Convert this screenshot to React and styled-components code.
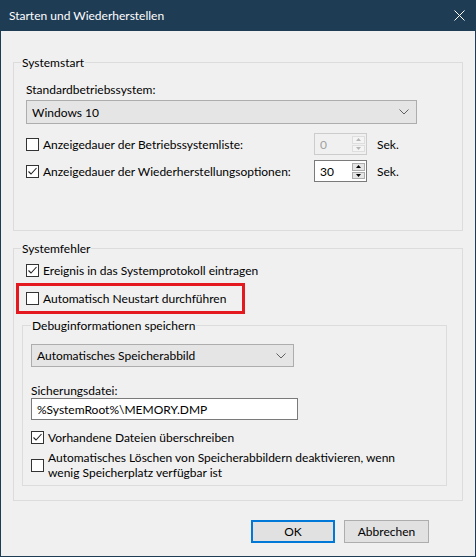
import React from "react";
import styled, { createGlobalStyle } from "styled-components";

const GlobalStyle = createGlobalStyle`
    html, body {
        margin: 0;
        padding: 0;
        background: #f0f0f0;
    }
    * {
        box-sizing: border-box;
    }
`;

const Window = styled.div`
    width: 476px;
    height: 557px;
    display: flex;
    flex-direction: column;
    background: #f0f0f0;
    border: 1px solid #1f3c55;
    border-top: none;
    font-family: "Lato", "Liberation Sans", sans-serif;
    font-size: 12px;
    line-height: 15px;
    color: #000;
`;

const TitleBar = styled.div`
    height: 31px;
    flex-shrink: 0;
    display: flex;
    align-items: center;
    justify-content: space-between;
    padding: 0 10px 0 8px;
    background: #1f3c55;
    color: #fff;
    font-size: 12px;
`;

const Body = styled.div`
    display: flex;
    flex-direction: column;
    padding: 24px 12px 0 12px;
`;

const Group = styled.fieldset`
    margin: ${(p) => p.$margin || "0"};
    padding: ${(p) => p.$padding || "0 12px"};
    border: 1px solid #dcdcdc;
    min-width: 0;
    display: flex;
    flex-direction: column;
`;

const Legend = styled.legend`
    padding: 0 1px;
    margin-left: ${(p) => p.$offset || 0}px;
`;

const Label = styled.div`
    margin-top: ${(p) => p.$top || 0}px;
`;

const Combo = styled.div`
    width: ${(p) => p.$width}px;
    height: ${(p) => p.$height || 24}px;
    margin-top: ${(p) => p.$top || 0}px;
    display: flex;
    align-items: center;
    justify-content: space-between;
    padding: 0 7px 0 5px;
    background: #e5e5e5;
    border: 1px solid #adadad;
`;

const TextBox = styled.div`
    width: ${(p) => p.$width}px;
    height: 22px;
    display: flex;
    align-items: center;
    padding: 0 5px;
    background: #fff;
    border: 1px solid #7a7a7a;
`;

const SpinRow = styled.div`
    display: grid;
    grid-template-columns: 278px 53px auto;
    column-gap: 10px;
    align-items: center;
    margin-top: ${(p) => p.$top || 0}px;
`;

const Spinner = styled.div`
    height: 22px;
    display: flex;
    align-items: stretch;
    border: 1px solid ${(p) => (p.$disabled ? "#cccccc" : "#7a7a7a")};
    color: ${(p) => (p.$disabled ? "#a0a0a0" : "#000")};
    background: ${(p) => (p.$disabled ? "#f0f0f0" : "#fff")};
`;

const SpinValue = styled.div`
    flex: 1;
    display: flex;
    align-items: center;
    padding-left: 5px;
`;

const SpinButtons = styled.div`
    width: 16px;
    display: flex;
    flex-direction: column;
    gap: 1px;
    padding: 2px 1px 2px 2px;
`;

const SpinButton = styled.div`
    flex: 1;
    display: flex;
    align-items: center;
    justify-content: center;
    background: ${(p) => (p.$disabled ? "#f4f4f4" : "#e5e5e5")};
    border: 1px solid ${(p) => (p.$disabled ? "#dedede" : "#acacac")};
`;

const CheckRow = styled.label`
    display: flex;
    align-items: center;
    gap: 4px;
    margin-top: ${(p) => p.$top || 0}px;
`;

const Box = styled.span`
    width: 13px;
    height: 13px;
    flex-shrink: 0;
    display: flex;
    align-items: center;
    justify-content: center;
    background: #fff;
    border: 1px solid #333;
`;

const Highlight = styled.div`
    width: 229px;
    margin: 5px 0 0 -10px;
    padding: 5px 7px;
    border: 3px solid #e3191f;
`;

const Footer = styled.div`
    display: flex;
    justify-content: flex-end;
    gap: 9px;
    padding: 19px 46px 0 0;
`;

const Button = styled.button`
    width: ${(p) => p.$width}px;
    height: 23px;
    padding: 0;
    font: inherit;
    color: #000;
    background: #e1e1e1;
    border: ${(p) => (p.$default ? "2px solid #0078d7" : "1px solid #adadad")};
`;

const Check = ({ checked }) => (
    <Box>
        {checked && (
            <svg width="11" height="11" viewBox="0 0 11 11">
                <path d="M1.5 5.5 L4 8 L9.5 2" fill="none" stroke="#222" strokeWidth="1.1" />
            </svg>
        )}
    </Box>
);

const Chevron = () => (
    <svg width="10" height="6" viewBox="0 0 10 6">
        <path d="M0.5 0.5 L5 5 L9.5 0.5" fill="none" stroke="#606060" strokeWidth="1" />
    </svg>
);

const Arrow = ({ up, disabled }) => (
    <svg width="5" height="3" viewBox="0 0 5 3">
        <path d={up ? "M0 3 L2.5 0 L5 3 Z" : "M0 0 L5 0 L2.5 3 Z"} fill={disabled ? "#b5b5b5" : "#000"} />
    </svg>
);

const NumberBox = ({ value, disabled }) => (
    <Spinner $disabled={disabled}>
        <SpinValue>{value}</SpinValue>
        <SpinButtons>
            <SpinButton $disabled={disabled}><Arrow up disabled={disabled} /></SpinButton>
            <SpinButton $disabled={disabled}><Arrow disabled={disabled} /></SpinButton>
        </SpinButtons>
    </Spinner>
);

const App = () => {
    return (
        <>
            <GlobalStyle />
            <Window>
                <TitleBar>
                    <span>Starten und Wiederherstellen</span>
                    <svg width="11" height="11" viewBox="0 0 11 11">
                        <path d="M0.5 0.5 L10.5 10.5 M10.5 0.5 L0.5 10.5" stroke="#fff" strokeWidth="1" />
                    </svg>
                </TitleBar>
                <Body>
                    <Group $padding="0 12px 48px 12px">
                        <Legend $offset={-5}>Systemstart</Legend>
                        <Label $top={12}>Standardbetriebssystem:</Label>
                        <Combo $width={391} $top={3}>
                            <span>Windows 10</span>
                            <Chevron />
                        </Combo>
                        <SpinRow $top={9}>
                            <CheckRow>
                                <Check />
                                Anzeigedauer der Betriebssystemliste:
                            </CheckRow>
                            <NumberBox value="0" disabled />
                            <span>Sek.</span>
                        </SpinRow>
                        <SpinRow $top={5}>
                            <CheckRow>
                                <Check checked />
                                Anzeigedauer der Wiederherstellungsoptionen:
                            </CheckRow>
                            <NumberBox value="30" />
                            <span>Sek.</span>
                        </SpinRow>
                    </Group>
                    <Group $margin="10px 0 0 0" $padding="0 12px 14px 12px">
                        <Legend $offset={-5}>Systemfehler</Legend>
                        <CheckRow $top={7}>
                            <Check checked />
                            Ereignis in das Systemprotokoll eintragen
                        </CheckRow>
                        <Highlight>
                            <CheckRow>
                                <Check />
                                Automatisch Neustart durchführen
                            </CheckRow>
                        </Highlight>
                        <Group $margin="4px 3px 0 -4px" $padding="0 8px 5px 8px">
                            <Legend>Debuginformationen speichern</Legend>
                            <Combo $width={263} $height={23} $top={11}>
                                <span>Automatisches Speicherabbild</span>
                                <Chevron />
                            </Combo>
                            <Label $top={16}>Sicherungsdatei:</Label>
                            <TextBox $width={267}>%SystemRoot%\MEMORY.DMP</TextBox>
                            <CheckRow $top={10}>
                                <Check checked />
                                Vorhandene Dateien überschreiben
                            </CheckRow>
                            <CheckRow $top={5}>
                                <Check />
                                <span>
                                    Automatisches Löschen von Speicherabbildern deaktivieren, wenn
                                    <br />
                                    wenig Speicherplatz verfügbar ist
                                </span>
                            </CheckRow>
                        </Group>
                    </Group>
                </Body>
                <Footer>
                    <Button $default $width={84}>OK</Button>
                    <Button $width={85}>Abbrechen</Button>
                </Footer>
            </Window>
        </>
    );
};

export default App;
